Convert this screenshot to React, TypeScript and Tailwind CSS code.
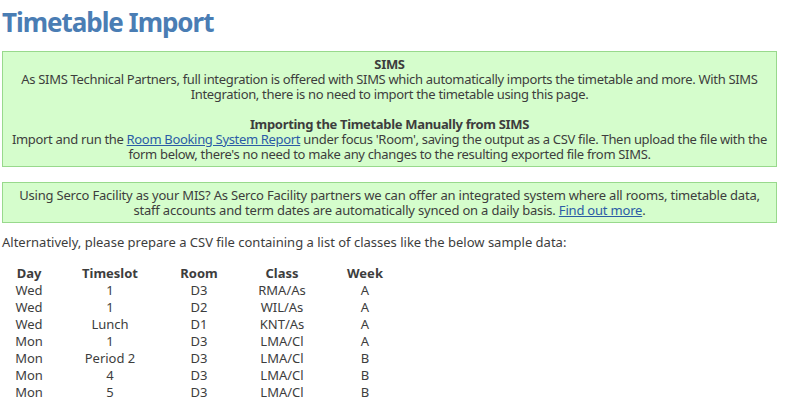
const rows = [
  ['Wed', '1', 'D3', 'RMA/As', 'A'],
  ['Wed', '1', 'D2', 'WIL/As', 'A'],
  ['Wed', 'Lunch', 'D1', 'KNT/As', 'A'],
  ['Mon', '1', 'D3', 'LMA/Cl', 'A'],
  ['Mon', 'Period 2', 'D3', 'LMA/Cl', 'B'],
  ['Mon', '4', 'D3', 'LMA/Cl', 'B'],
  ['Mon', '5', 'D3', 'LMA/Cl', 'B'],
];

const headers = ['Day', 'Timeslot', 'Room', 'Class', 'Week'];

function Notice({ children, className = '' }: { children: React.ReactNode; className?: string }) {
  return (
    <div
      className={`w-[775px] border border-[#98d98c] bg-[#d5fdcc] px-[1px] pt-[5px] pb-[4px] text-center ${className}`}
    >
      {children}
    </div>
  );
}

export default function App() {
  return (
    <div className="min-h-screen bg-white px-[2px] font-['Noto_Sans',sans-serif] text-[13px] leading-[15px] text-[#3d3d3d]">
      <h1 className="mt-[4px] mb-[11px] text-[26px] leading-[36px] font-bold tracking-[-0.04em] text-[#4a7db4]">
        Timetable Import
      </h1>

      <Notice className="tracking-[-0.025em]">
        <p className="font-bold">SIMS</p>
        <p>
          As SIMS Technical Partners, full integration is offered with SIMS which automatically imports the timetable and
          more. With SIMS Integration, there is no need to import the timetable using this page.
        </p>
        <p className="mt-[15px] font-bold">Importing the Timetable Manually from SIMS</p>
        <p>
          Import and run the{' '}
          <a href="#" className="text-[#2b5ca6] underline">
            Room Booking System Report
          </a>{' '}
          under focus 'Room', saving the output as a CSV file. Then upload the file with the form below, there's no need
          to make any changes to the resulting exported file from SIMS.
        </p>
      </Notice>

      <div className="mt-[15px]">
        <Notice className="px-[6px] tracking-[-0.015em]">
          <p>
            Using Serco Facility as your MIS? As Serco Facility partners we can offer an integrated system where all
            rooms, timetable data, staff accounts and term dates are automatically synced on a daily basis.{' '}
            <a href="#" className="text-[#2b5ca6] underline">
              Find out more
            </a>
            .
          </p>
        </Notice>
      </div>

      <p className="mt-[12px]">
        Alternatively, please prepare a CSV file containing a list of classes like the below sample data:
      </p>

      <div className="mt-[15px] grid grid-cols-[54px_108px_70px_96px_70px] text-center leading-[17px]">
        {headers.map((h) => (
          <div key={h} className="font-bold">
            {h}
          </div>
        ))}
        {rows.map((r, i) => r.map((c, j) => <div key={`${i}-${j}`}>{c}</div>))}
      </div>
    </div>
  );
}
